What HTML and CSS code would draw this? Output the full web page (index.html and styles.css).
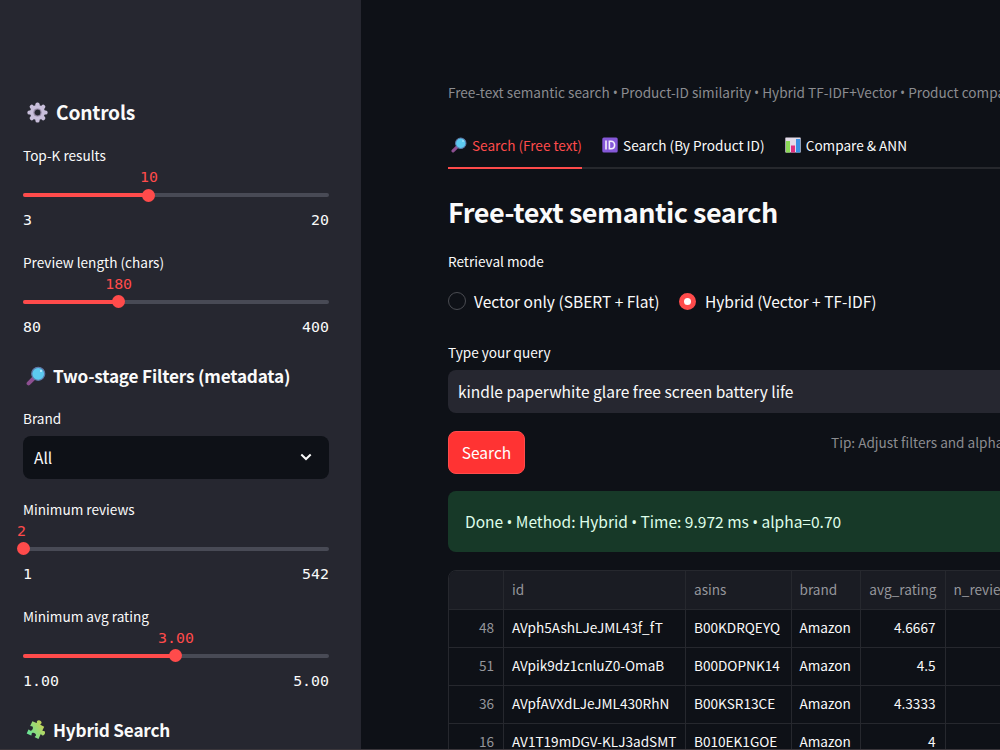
FILE: index.html
```html
<!DOCTYPE html>
<html lang="en">
  <head>
    <meta charset="UTF-8" />
    <meta name="viewport" content="width=device-width, initial-scale=1.0" />
    <title>Semantic Product Search</title>
    <link rel="stylesheet" href="styles.css">
  </head>
  <body>
    <aside class="sidebar">
      <h2 class="sidebar-title">
        <svg class="icon-gear" viewBox="0 0 22 22">
          <g fill="#c9bfdb">
            <rect x="8.8" y="0.4" width="4.4" height="21.2" rx="2" />
            <rect x="8.8" y="0.4" width="4.4" height="21.2" rx="2" transform="rotate(45 11 11)" />
            <rect x="8.8" y="0.4" width="4.4" height="21.2" rx="2" transform="rotate(90 11 11)" />
            <rect x="8.8" y="0.4" width="4.4" height="21.2" rx="2" transform="rotate(135 11 11)" />
            <circle cx="11" cy="11" r="7.8" />
          </g>
          <circle cx="11" cy="11" r="3.7" fill="#262730" stroke="#9588a5" stroke-width="1.2" />
        </svg>
        <span>Controls</span>
      </h2>

      <div class="slider">
        <label>Top-K results</label>
        <div class="slider-value"><span style="left: 41.2%">10</span></div>
        <div class="slider-track"><div class="slider-fill" style="width: 41.2%"></div></div>
        <div class="slider-ticks"><span>3</span><span>20</span></div>
      </div>

      <div class="slider">
        <label>Preview length (chars)</label>
        <div class="slider-value"><span style="left: 31.25%">180</span></div>
        <div class="slider-track"><div class="slider-fill" style="width: 31.25%"></div></div>
        <div class="slider-ticks"><span>80</span><span>400</span></div>
      </div>

      <h3 class="sidebar-subtitle">
        <svg class="icon-md" viewBox="0 0 20 20">
          <path d="M2.6 17.4 8 12" stroke="#8d4f91" stroke-width="4" stroke-linecap="round" />
          <circle cx="12.2" cy="7.8" r="6.5" fill="#5ccaf0" stroke="#5d78a8" stroke-width="1.3" />
          <circle cx="15" cy="5" r="1" fill="#c5f1ff" />
        </svg>
        <span>Two-stage Filters (metadata)</span>
      </h3>

      <div class="select-group">
        <label>Brand</label>
        <div class="select">
          <span>All</span>
          <svg class="icon-chevron" viewBox="0 0 12 8">
            <path d="M1.3 1.5 6 6l4.7-4.5" fill="none" stroke="#fafafa" stroke-width="2" />
          </svg>
        </div>
      </div>

      <div class="slider">
        <label>Minimum reviews</label>
        <div class="slider-value"><span class="at-start" style="left: 0.2%">2</span></div>
        <div class="slider-track"><div class="slider-fill" style="width: 0.2%"></div></div>
        <div class="slider-ticks"><span>1</span><span>542</span></div>
      </div>

      <div class="slider">
        <label>Minimum avg rating</label>
        <div class="slider-value"><span style="left: 50%">3.00</span></div>
        <div class="slider-track"><div class="slider-fill" style="width: 50%"></div></div>
        <div class="slider-ticks"><span>1.00</span><span>5.00</span></div>
      </div>

      <h3 class="sidebar-subtitle">
        <svg class="icon-md" viewBox="0 0 20 20">
          <defs>
            <linearGradient id="puzzle" x1="0.8" y1="0" x2="0.2" y2="1">
              <stop offset="0" stop-color="#d5cf4c" />
              <stop offset="1" stop-color="#6be394" />
            </linearGradient>
          </defs>
          <path transform="rotate(25 10 10)" fill="url(#puzzle)" d="M3 3.5h4.5c.7-.6-.6-1.2-.2-2.4.7-1.9 4-1.9 4.7 0 .4 1.2-.9 1.8-.2 2.4H16v4.3c.6.7 1.2-.6 2.3-.2 1.7.7 1.7 3.8 0 4.5-1.1.4-1.7-.9-2.3-.2V17h-4c-.7-.6.6-1.2.2-2.3-.7-1.7-3.8-1.7-4.5 0-.4 1.1.9 1.7.2 2.3H3v-4.3c.6-.7 1.2.6 2.3.2 1.7-.7 1.7-3.8 0-4.5-1.1-.4-1.7.9-2.3.2z" />
        </svg>
        <span>Hybrid Search</span>
      </h3>
    </aside>

    <main class="main">
      <div class="content">
        <p class="caption">Free-text semantic search <b>•</b> Product-ID similarity <b>•</b> Hybrid TF-IDF+Vector <b>•</b> Product comparison</p>

        <nav class="tabs">
          <a class="tab active">
            <svg class="icon-sm" viewBox="0 0 20 20">
              <path d="M2.6 17.4 8 12" stroke="#8d4f91" stroke-width="4" stroke-linecap="round" />
              <circle cx="12.2" cy="7.8" r="6.5" fill="#5ccaf0" stroke="#5d78a8" stroke-width="1.3" />
              <circle cx="15" cy="5" r="1" fill="#c5f1ff" />
            </svg>
            <span>Search (Free text)</span>
          </a>
          <a class="tab">
            <svg class="icon-sm" viewBox="0 0 16 16">
              <rect x="0.3" y="0.5" width="15.4" height="15" rx="1.5" fill="#8558d8" />
              <path d="M4 3.5v9M7.4 4.2v7.6h1.5c2.3 0 3.7-1.4 3.7-3.8S11.2 4.2 8.9 4.2z" fill="none" stroke="#f4f0fb" stroke-width="1.6" />
            </svg>
            <span>Search (By Product ID)</span>
          </a>
          <a class="tab">
            <svg class="icon-sm" viewBox="0 0 16 16">
              <rect x="0.3" y="0.5" width="15.4" height="15" rx="0.6" fill="#e3dbe9" />
              <rect x="1" y="4" width="4" height="11.5" fill="#8bd957" />
              <rect x="6" y="8.5" width="4" height="7" fill="#e0307f" />
              <rect x="11" y="2" width="4.2" height="13.5" fill="#3991e4" />
            </svg>
            <span>Compare &amp; ANN</span>
          </a>
        </nav>

        <h1>Free-text semantic search</h1>

        <label>Retrieval mode</label>
        <div class="radio-group">
          <div class="radio"><i class="radio-dot"></i><span>Vector only (SBERT + Flat)</span></div>
          <div class="radio"><i class="radio-dot checked"></i><span>Hybrid (Vector + TF-IDF)</span></div>
        </div>

        <label>Type your query</label>
        <div class="query">kindle paperwhite glare free screen battery life</div>

        <div class="actions">
          <button>Search</button>
          <p class="caption">Tip: Adjust filters and alpha in the sidebar</p>
        </div>

        <div class="success">Done <b>•</b> Method: Hybrid <b>•</b> Time: 9.972 ms <b>•</b> alpha=0.70</div>

        <div class="table">
          <div class="row head">
            <span></span><span>id</span><span>asins</span><span>brand</span><span class="num">avg_rating</span><span>n_reviews</span>
          </div>
          <div class="row">
            <span class="index">48</span><span>AVph5AshLJeJML43f_fT</span><span>B00KDRQEYQ</span><span>Amazon</span><span class="num">4.6667</span><span></span>
          </div>
          <div class="row">
            <span class="index">51</span><span>AVpik9dz1cnluZ0-OmaB</span><span>B00DOPNK14</span><span>Amazon</span><span class="num">4.5</span><span></span>
          </div>
          <div class="row">
            <span class="index">36</span><span>AVpfAVXdLJeJML430RhN</span><span>B00KSR13CE</span><span>Amazon</span><span class="num">4.3333</span><span></span>
          </div>
          <div class="row">
            <span class="index">16</span><span>AV1T19mDGV-KLJ3adSMT</span><span>B010EK1GOE</span><span>Amazon</span><span class="num">4</span><span></span>
          </div>
        </div>
      </div>
    </main>
  </body>
</html>
```
FILE: styles.css
```css
* {
  box-sizing: border-box;
}

body {
  margin: 0;
  height: 100vh;
  display: flex;
  overflow: hidden;
  border-bottom: 1px solid #3a363b;
  background-color: #0e1117;
  color: #fafafa;
  font-family: "Noto Sans CJK SC", sans-serif;
  font-size: 15.54px;
  line-height: 24px;
  white-space: nowrap;
}

h1,
h2,
h3,
p {
  margin: 0;
}

/* bullet separators */
b {
  font-family: "Open Sans", sans-serif;
  font-weight: normal;
  line-height: 1;
  margin: 0 -0.1px;
}

label {
  display: block;
  height: 24px;
  font-size: 13.6px;
  line-height: 25px;
}

svg {
  flex: none;
}

/* Sidebar */

.sidebar {
  flex: none;
  width: 361px;
  padding: 97px 32px 0 23px;
  background-color: #262730;
}

.sidebar-title,
.sidebar-subtitle {
  display: flex;
  align-items: center;
  height: 30px;
  font-weight: 600;
}

.sidebar-title {
  gap: 8px;
  padding-left: 4px;
  margin-bottom: 16px;
  font-size: 19.2px;
  letter-spacing: -0.2px;
}

.sidebar-subtitle {
  gap: 7px;
  padding-left: 3px;
  margin-top: 4px;
  margin-bottom: 15px;
  font-size: 17.2px;
  letter-spacing: -0.19px;
}

.icon-gear {
  width: 21px;
  height: 21px;
}

.icon-md {
  width: 20px;
  height: 20px;
}

.icon-sm {
  width: 16px;
  height: 16px;
}

.icon-chevron {
  width: 12px;
  height: 8px;
}

/* Sliders */

.slider {
  padding-bottom: 19.8px;
}

.select-group + .slider {
  padding-bottom: 20.4px;
}

.slider-value {
  position: relative;
  height: 20px;
  font-family: "DejaVu Sans Mono", monospace;
  font-size: 14.9px;
  line-height: 21px;
  color: #ff4b4b;
}

.slider-value span {
  position: absolute;
  transform: translateX(-50%);
}

.slider-value .at-start {
  transform: translateX(-6.5px);
}

.slider-track {
  height: 4px;
  margin: 6px 0;
  border-radius: 2px;
  background-color: #484a55;
}

.slider-fill {
  position: relative;
  height: 4px;
  border-radius: 2px;
  background-color: #ff4b4b;
}

.slider-fill::after {
  content: "";
  position: absolute;
  right: -6px;
  top: -4.5px;
  width: 13px;
  height: 13px;
  border-radius: 50%;
  background-color: #ff4b4b;
}

.slider-ticks {
  display: flex;
  justify-content: space-between;
  height: 27px;
  padding-top: 6px;
  font-family: "DejaVu Sans Mono", monospace;
  font-size: 14.9px;
  line-height: 22px;
}

/* Brand filter */

.select-group {
  margin-bottom: 18px;
}

.select {
  display: flex;
  align-items: center;
  justify-content: space-between;
  height: 43px;
  margin-top: 6px;
  padding: 0 17px 0 11px;
  border-radius: 8px;
  background-color: #0e1117;
}

/* Main area */

.main {
  flex: 1;
  min-width: 0;
  overflow: hidden;
  padding: 81px 0 0 87px;
}

.content {
  width: 766px;
}

.caption {
  height: 24px;
  font-size: 13.6px;
  line-height: 23px;
  color: #8b8c90;
}

.tabs {
  display: flex;
  gap: 17.2px;
  height: 43px;
  margin-top: 20px;
  box-shadow: inset 0 -2px #26282d;
}

.tab {
  display: flex;
  align-items: center;
  gap: 5px;
  padding-left: 3px;
  padding-bottom: 5px;
  font-size: 13.6px;
}

.tab.active {
  color: #ff4b4b;
  box-shadow: inset 0 -2px #ff4b4b;
}

.tabs,
.tab {
  height: 44px;
}

h1 {
  margin-top: 23px;
  margin-bottom: 17px;
  font-size: 27px;
  font-weight: 600;
  line-height: 40px;
  letter-spacing: -0.46px;
}

.radio-group {
  display: flex;
  gap: 19.5px;
  height: 24px;
  margin: 16px 0 27px;
}

.radio {
  display: flex;
  align-items: center;
  gap: 8px;
  line-height: 22px;
}

.radio-dot {
  width: 18px;
  height: 18px;
  border: 1px solid #4a4c52;
  border-radius: 50%;
}

.radio-dot.checked {
  width: 17px;
  height: 17px;
  margin-right: 1px;
  border: 5px solid #ff4b4b;
  background-color: #fff;
}

.query {
  height: 43px;
  margin-top: 6px;
  padding: 0 10px;
  border-radius: 8px;
  background-color: #262730;
  line-height: 43px;
}

.actions {
  display: grid;
  grid-template-columns: 383px 1fr;
  margin-top: 18px;
}

button {
  width: 77px;
  height: 43px;
  padding: 0 0 2px;
  border: 1px solid #ff4b4b;
  border-radius: 8px;
  background-color: #ff3333;
  color: #fff;
  font: inherit;
}

.success {
  height: 61px;
  margin-top: 17px;
  padding: 0 17px;
  border-radius: 8px;
  background-color: #173928;
  color: #dffde9;
  line-height: 61px;
}

/* Results table */

.table {
  margin-top: 18px;
  border: 1px solid #26282e;
  border-radius: 8px;
  overflow: hidden;
}

.row {
  display: grid;
  grid-template-columns: 55px 182px 105.5px 69px 85px 268.5px;
  height: 38px;
  border-bottom: 1px solid #26282e;
  font-size: 13.6px;
  line-height: 35px;
}

.row span {
  padding: 0 8px;
  border-right: 1px solid #26282e;
}

.row.head {
  height: 39px;
  background-color: #1a1c23;
  color: #95969b;
  line-height: 37px;
}

.row .index {
  padding-right: 9px;
  text-align: right;
  color: #95969b;
}

.row .num {
  padding-right: 9px;
  text-align: right;
}

.row.head .num {
  padding-right: 8px;
}
```
